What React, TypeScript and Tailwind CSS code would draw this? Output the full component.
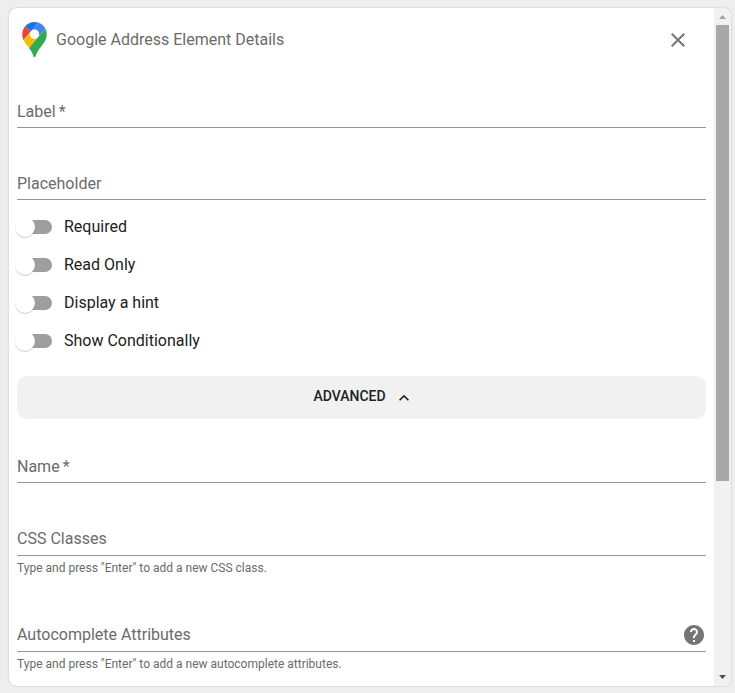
import { useState } from 'react'
import type { ReactNode } from 'react'

const toggles = ['Required', 'Read Only', 'Display a hint', 'Show Conditionally']

function Icon({ path, className }: { path: string; className: string }) {
  return (
    <svg viewBox="0 0 24 24" fill="currentColor" className={className}>
      <path d={path} />
    </svg>
  )
}

function MapsPin() {
  return (
    <svg viewBox="0 0 92.3 132.3" className="mb-0.5 h-[35px] w-[25px] shrink-0">
      <path fill="#1a73e8" d="M60.2 2.2C55.8.8 51 0 46.1 0 32 0 19.3 6.4 10.8 16.5l21.8 18.3L60.2 2.2z" />
      <path fill="#ea4335" d="M10.8 16.5C4.1 24.5 0 34.9 0 46.1c0 8.7 1.7 15.7 4.6 22l28-33.3-21.8-18.3z" />
      <path fill="#4285f4" d="M46.2 28.5c9.8 0 17.7 7.9 17.7 17.7 0 4.3-1.6 8.3-4.2 11.4 0 0 13.9-16.6 27.5-32.7-5.6-10.8-15.3-19-27-22.7L32.6 34.8c3.3-3.8 8.1-6.3 13.6-6.3" />
      <path fill="#fbbc04" d="M46.2 63.8c-9.8 0-17.7-7.9-17.7-17.7 0-4.3 1.5-8.3 4.1-11.3l-28 33.3c4.8 10.6 12.8 19.2 21 29.9l34.1-40.5c-3.3 3.9-8.1 6.3-13.5 6.3" />
      <path fill="#34a853" d="M59.1 109.2c15.4-24.1 33.3-35 33.3-63 0-7.7-1.9-14.9-5.2-21.3L25.6 98c2.6 3.4 5.3 7.3 7.9 11.3 9.4 14.5 6.8 23.1 12.8 23.1s3.4-8.7 12.8-23.2" />
    </svg>
  )
}

interface FieldProps {
  label: string
  required?: boolean
  hint?: string
  children?: ReactNode
}

function Field({ label, required, hint, children }: FieldProps) {
  return (
    <div>
      <div className="flex h-8 items-start justify-between border-b border-[#949494]">
        <span className={`text-[#6b6b6b] ${hint ? 'leading-[30px]' : 'leading-8'}`}>
          {label}
          {required && <span className="ml-[3px]">*</span>}
        </span>
        {children}
      </div>
      {hint && <p className="mt-[3px] h-[18px] text-xs leading-[18px] text-[#6b6b6b]">{hint}</p>}
    </div>
  )
}

function Toggle({ label }: { label: string }) {
  const [on, setOn] = useState(false)

  return (
    <button onClick={() => setOn(!on)} className="flex h-[38px] items-center gap-3 text-left">
      <span className={`mt-px flex h-3.5 w-[35px] items-center rounded-full ${on ? 'justify-end bg-blue-300' : 'bg-[#9e9e9e]'}`}>
        <span className="-ml-0.5 size-5 shrink-0 rounded-full bg-white shadow-[0_1px_1px_rgba(0,0,0,0.2)]" />
      </span>
      <span className="mt-px text-[#212121]">{label}</span>
    </button>
  )
}

function Scrollbar() {
  return (
    <div className="flex w-[17px] shrink-0 flex-col items-center bg-[#f1f1f1]">
      <svg viewBox="0 0 17 17" className="size-[17px] shrink-0 fill-[#a3a3a3]">
        <path d="M5 11h7L8.5 7z" />
      </svg>
      <div className="h-[456px] w-[13px] bg-[#a8a8a8]" />
      <svg viewBox="0 0 17 17" className="mt-auto size-[17px] shrink-0 fill-[#505050]">
        <path d="M5 6h7l-3.5 4z" />
      </svg>
    </div>
  )
}

export default function App() {
  return (
    <div className="h-[693px] w-[735px] bg-[#eee] pt-2 pl-[9px] font-['Roboto',sans-serif] text-base">
      <div className="flex h-[678px] w-[722px] overflow-hidden rounded-lg bg-white shadow-[0_0_2px_rgba(0,0,0,0.25)]">
        <div className="flex w-[705px] flex-col px-2">
          {/* Header */}
          <div className="flex h-16 items-center pr-4 pl-[5px]">
            <MapsPin />
            <h1 className="ml-[9px] grow text-[#6b6b6b]">Google Address Element Details</h1>
            <button aria-label="Close">
              <Icon
                className="size-6 text-[#757575]"
                path="M19 6.41 17.59 5 12 10.59 6.41 5 5 6.41 10.59 12 5 17.59 6.41 19 12 13.41 17.59 19 19 17.59 13.41 12z"
              />
            </button>
          </div>

          <div className="mt-6 flex flex-col gap-10">
            <Field label="Label" required />
            <Field label="Placeholder" />
          </div>

          <div className="mt-[7px] flex flex-col">
            {toggles.map((label) => (
              <Toggle key={label} label={label} />
            ))}
          </div>

          <button className="mt-[17px] flex h-[43px] shrink-0 items-center justify-center rounded-[10px] bg-[#f1f1f1] pl-1 text-sm font-medium text-[#212121]">
            <span className="-mt-[3px]">ADVANCED</span>
            <Icon className="ml-2 size-5" path="m12 8-6 6 1.41 1.41L12 10.83l4.59 4.58L18 14z" />
          </button>

          {/* Advanced settings */}
          <div className="mt-8 flex flex-col">
            <Field label="Name" required />
            <div className="mt-[41px]">
              <Field label="CSS Classes" hint={'Type and press "Enter" to add a new CSS class.'} />
            </div>
            <div className="mt-[43px]">
              <Field label="Autocomplete Attributes" hint={'Type and press "Enter" to add a new autocomplete attributes.'}>
                <Icon
                  className="mt-[3px] size-6 text-[#757575]"
                  path="M12 2C6.48 2 2 6.48 2 12s4.48 10 10 10 10-4.48 10-10S17.52 2 12 2zm1 17h-2v-2h2v2zm2.07-7.75-.9.92C13.45 12.9 13 13.5 13 15h-2v-.5c0-1.1.45-2.1 1.17-2.83l1.24-1.26c.37-.36.59-.86.59-1.41 0-1.1-.9-2-2-2s-2 .9-2 2H8c0-2.21 1.79-4 4-4s4 1.79 4 4c0 .88-.36 1.68-.93 2.25z"
                />
              </Field>
            </div>
          </div>
        </div>
        <Scrollbar />
      </div>
    </div>
  )
}
